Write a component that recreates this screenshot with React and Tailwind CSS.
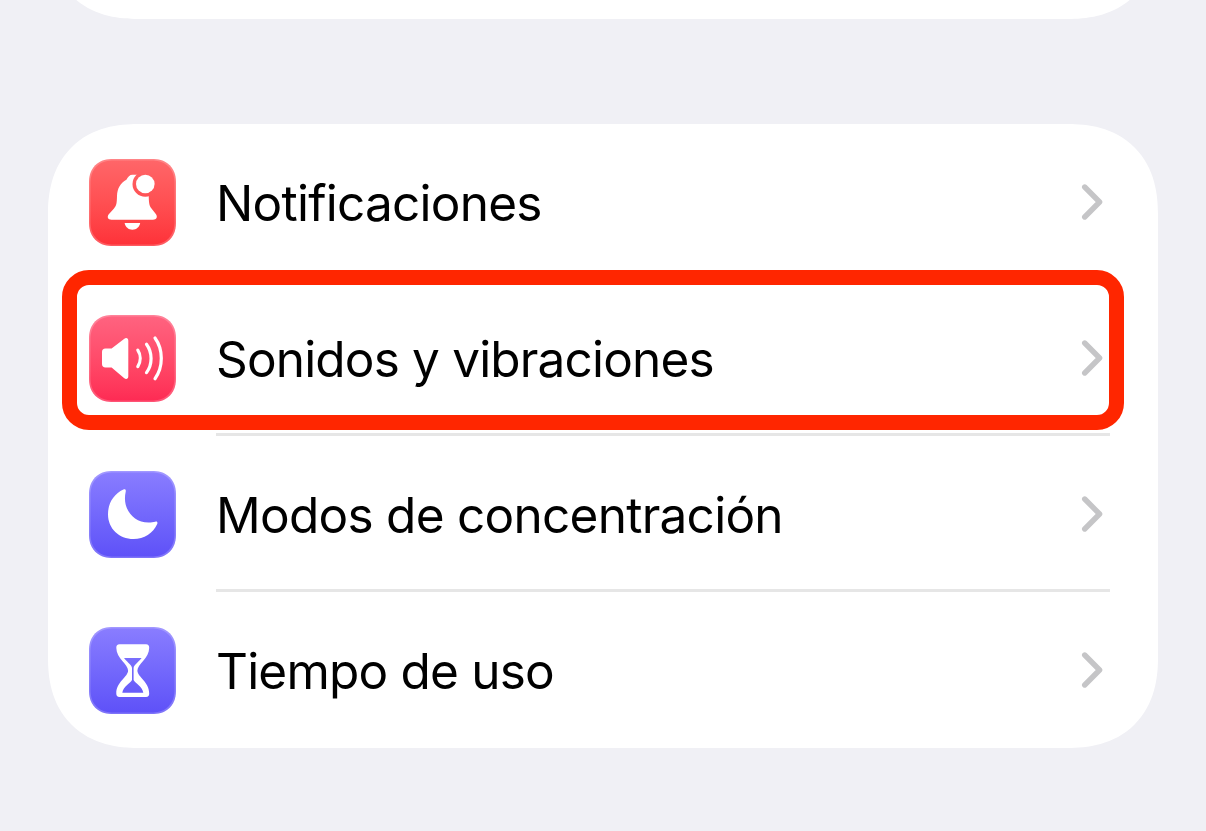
import { useId } from "react";

function BellIcon() {
  const maskId = useId();

  return (
    <svg viewBox="0 0 87 87" className="size-full" fill="white">
      <mask id={maskId}>
        <rect width="87" height="87" fill="white" />
        <circle cx="56.3" cy="25" r="12.8" fill="black" />
      </mask>
      <path
        mask={`url(#${maskId})`}
        d="M43.5 15.8C40.6 15.8 39 17.8 37.4 20.8C31.6 23.8 28.2 29.5 28 37C27.8 44 27.6 46.4 25 49.4L20 55C17.5 58 19 60.7 22.5 60.7H64C67.5 60.7 69 58 66.8 55L62.5 49.6C59.8 46.4 59.9 42 59.7 36V20L50 15.8Z"
      />
      <circle cx="56.3" cy="25" r="9.3" />
      <path d="M35.6 64H51.2C50.4 68 47.4 70.7 43.4 70.7C39.4 70.7 36.4 68 35.6 64Z" />
    </svg>
  );
}

function SpeakerIcon() {
  return (
    <svg viewBox="0 0 87 87" className="size-full" fill="none" stroke="white" strokeLinecap="round" strokeWidth="3.2">
      <path
        fill="white"
        stroke="none"
        d="M16.5 33.6H22.6L35 23.9C37.2 22.2 39.3 23 39.3 25.7V61.3C39.3 64 37 64.7 35 63L22.6 52.4H16.5C14.2 52.4 13 51.2 13 49V37C13 34.8 14.2 33.6 16.5 33.6Z"
      />
      <path d="M48.8 35.2C52 40 52 46.5 48.8 51.6" />
      <path d="M57.5 29.2C63.6 37.5 63.6 49.4 57.5 57.6" />
      <path d="M66 23C74.4 34.5 74.4 52 66 63.7" />
    </svg>
  );
}

function MoonIcon() {
  return (
    <svg viewBox="0 0 87 87" className="size-full" fill="white">
      <path d="M34.4 18.6C36.2 17.7 37.2 18.8 36.7 20.7C33 37 43.5 51.5 59.5 51.5C62.3 51.5 64.3 51.2 66.3 50.7C68 50.3 68.9 51.4 68.2 53C64.2 62.2 55 68 44.6 68C30 68 19 57.5 19 43.2C19 32 25 22.9 34.4 18.6Z" />
    </svg>
  );
}

function HourglassIcon() {
  return (
    <svg viewBox="0 0 87 87" className="size-full" fill="white" fillRule="evenodd">
      <path d="M30.5 17.2H57C59.3 17.2 60.2 18.5 60.2 20.7C60.2 31.5 48.4 37 48.4 43.5C48.4 50 60.2 54.5 60.2 66.5C60.2 68.8 59.3 70 57 70H30.5C28.2 70 27.3 68.8 27.3 66.5C27.3 54.5 39.1 50 39.1 43.5C39.1 37 27.3 31.5 27.3 20.7C27.3 18.5 28.2 17.2 30.5 17.2ZM35 31H52.6C51 33.8 44.6 38 44.6 41V53C46.2 56 53.4 59.6 54.3 65.8H33.3C34.2 59.6 41.4 56 43 53V41C43 38 36.6 33.8 35 31Z" />
    </svg>
  );
}

function Chevron() {
  return (
    <svg
      viewBox="0 0 22 38"
      className="mr-[7px] h-[38px] w-[22px]"
      fill="none"
      stroke="#c5c5c7"
      strokeWidth="5.4"
      strokeLinecap="round"
      strokeLinejoin="round"
    >
      <path d="M3.7 4L18.6 19L3.7 34" />
    </svg>
  );
}

const items = [
  { label: "Notificaciones", Icon: BellIcon, tile: "from-[#ff6669] to-[#fe3038]", text: "tracking-[-0.75px]" },
  {
    label: "Sonidos y vibraciones",
    Icon: SpeakerIcon,
    tile: "from-[#ff6380] to-[#fe2953]",
    text: "tracking-[-0.83px]",
    highlighted: true,
  },
  { label: "Modos de concentración", Icon: MoonIcon, tile: "from-[#8a7dff] to-[#5e50f8]", text: "tracking-[-0.73px]" },
  { label: "Tiempo de uso", Icon: HourglassIcon, tile: "from-[#8a7dff] to-[#5e50f8]", text: "tracking-[-0.8px]" },
];

// SettingsRow — icon tile, label and chevron, with a hairline under all but the last row
function SettingsRow({ item, last }) {
  const { label, Icon, tile, text, highlighted } = item;

  return (
    <li className="relative flex h-[156px] pl-[41px]">
      <div
        className={`mt-[35px] size-[87px] shrink-0 rounded-[24px] bg-linear-to-b [corner-shape:superellipse(1.2)] inset-ring-[1.5px] inset-ring-white/20 ${tile}`}
      >
        <Icon />
      </div>
      <div
        className={`mr-12 ml-10 flex flex-1 items-center justify-between ${last ? "pb-[3px]" : "border-b-3 border-[#e6e6e6]"}`}
      >
        <span className={`mt-[7px] text-[49.5px] leading-none whitespace-nowrap text-black ${text}`}>{label}</span>
        <div className="mt-[3px]">
          <Chevron />
        </div>
      </div>
      {highlighted && (
        <div className="absolute top-[-10px] left-[14px] h-[160px] w-[1062px] rounded-[27px] border-15 border-[#ff2600]" />
      )}
    </li>
  );
}

export default function App() {
  return (
    <main className="h-[831px] overflow-hidden bg-[#f0f0f5] px-12 font-['Inter',sans-serif]">
      <div className="-mt-[181px] h-[200px] rounded-[90px] bg-white [corner-shape:superellipse(1.2)]" />
      <ul className="mt-[105px] rounded-[90px] bg-white [corner-shape:superellipse(1.2)]">
        {items.map((item, i) => (
          <SettingsRow key={item.label} item={item} last={i === items.length - 1} />
        ))}
      </ul>
    </main>
  );
}
